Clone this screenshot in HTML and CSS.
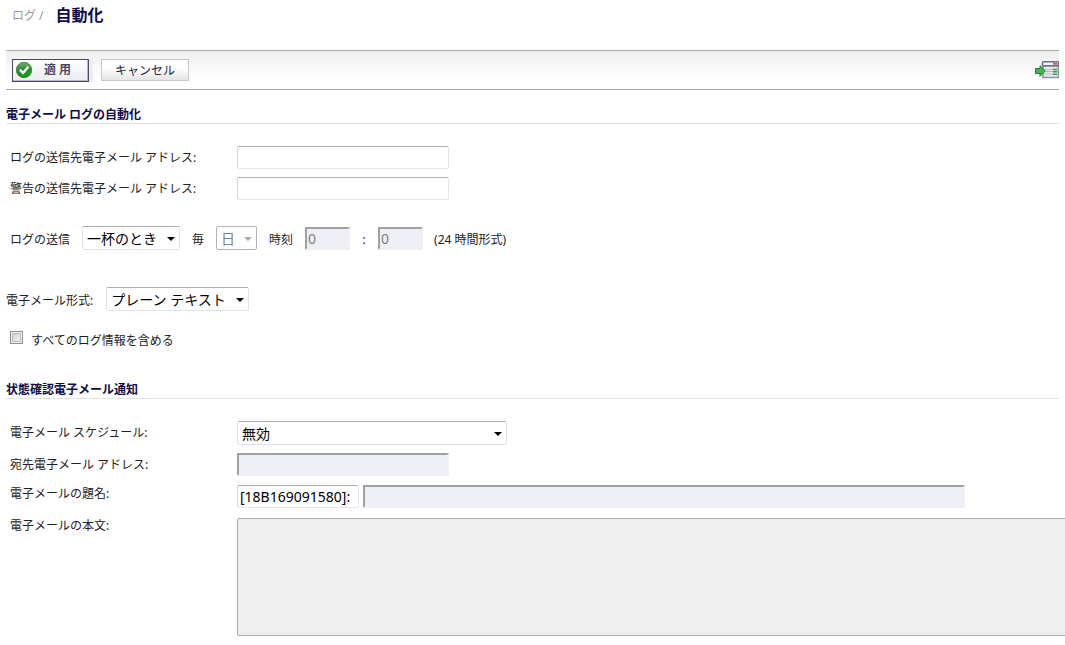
FILE: index.html
```html
<!DOCTYPE html>
<html lang="ja">
<head>
<meta charset="utf-8">
<title>ログ / 自動化</title>
<link rel="stylesheet" href="styles.css">
</head>
<body>
<header class="page-head">
  <span class="crumb">ログ /</span>
  <h1 class="title">自動化</h1>
</header>
<form class="page">
  <div class="toolbar">
    <button type="button" class="apply">
      <svg class="apply-icon" viewBox="0 0 17 17" aria-hidden="true">
        <defs>
          <linearGradient id="ball" x1="0" y1="0" x2="0" y2="1"><stop offset="0" stop-color="#6fb26f"/><stop offset=".5" stop-color="#2c8b2d"/><stop offset="1" stop-color="#0f9a14"/></linearGradient>
        </defs>
        <circle cx="8" cy="8" r="7.700" fill="url(#ball)" stroke="#2f7d32" stroke-width=".8"/>
        <path d="M3.800 7.600L7 11L12.300 4.800" fill="none" stroke="#fff" stroke-width="2.300"/>
      </svg>
      <span>適 用</span>
    </button>
    <button type="button" class="cancel">キャンセル</button>
    <button type="button" class="mode" aria-label="モード">
      <svg class="mode-icon" viewBox="0 0 24 18" aria-hidden="true">
        <path d="M7.500 5V1.500Q7.500 .8 8.500 .8H22.500Q23.300 .8 23.300 1.500V5Z" fill="#eef0f6" stroke="#6c6f86" stroke-width="1.500"/>
        <path d="M8 5V16.500H23.300V5Z" fill="#e6e8ee" stroke="#8f91a3" stroke-width="1.500"/>
        <path d="M7 4.800H24" stroke="#6c6f86" stroke-width="1.200"/>
        <path d="M18 2.800H22" stroke="#d0525c" stroke-width="1.800"/>
        <path d="M10 8.500H18M10 10.500H18M10 13H18" stroke="#b5b7c4"/>
        <path d="M18 8.500H22M18 10.800H22M18 13.200H22" stroke="#3f9b43" stroke-width="1.500"/>
        <path d="M.5 7.500H5V4.800L10.300 10L5 15.300V12.500H.5Z" fill="#45b54a" stroke="#20812a"/>
      </svg>
    </button>
  </div>

  <section class="section">
    <h2 class="heading">電子メール ログの自動化</h2>
    <div class="rows">
      <div class="row">
        <label class="label" for="log-to">ログの送信先電子メール アドレス:</label>
        <input class="box medium" id="log-to" type="text">
      </div>
      <div class="row">
        <label class="label" for="alert-to">警告の送信先電子メール アドレス:</label>
        <input class="box medium" id="alert-to" type="text">
      </div>
    </div>
    <div class="schedule">
      <label class="low" for="when">ログの送信</label>
      <span class="pick pick-when"><select id="when"><option>一杯のとき</option></select></span>
      <label class="low" for="every">毎</label>
      <span class="pick pick-day off"><select id="every" disabled><option>日</option></select></span>
      <label class="low at" for="hour">時刻</label>
      <input class="box off-box time" id="hour" type="text" value="0" disabled>
      <label class="low colon" for="minute">:</label>
      <input class="box off-box time" id="minute" type="text" value="0" disabled>
      <span class="low hint">(24 時間形式)</span>
    </div>
    <div class="format">
      <label class="low" for="format">電子メール形式:</label>
      <span class="pick pick-format"><select id="format"><option>プレーン テキスト</option></select></span>
    </div>
    <div class="include">
      <input class="check" id="all" type="checkbox">
      <label class="check-label" for="all">すべてのログ情報を含める</label>
    </div>
  </section>

  <section class="section section-health">
    <h2 class="heading">状態確認電子メール通知</h2>
    <div class="rows">
      <div class="row">
        <label class="label" for="plan">電子メール スケジュール:</label>
        <span class="pick pick-plan"><select id="plan"><option>無効</option></select></span>
      </div>
      <div class="row">
        <label class="label" for="to">宛先電子メール アドレス:</label>
        <input class="box off-box medium" id="to" type="text" disabled>
      </div>
      <div class="row top">
        <label class="label" for="subject">電子メールの題名:</label>
        <input class="box serial" type="text" value="[18B169091580]:" aria-label="題名の接頭辞" readonly>
        <input class="box off-box long" id="subject" type="text" disabled>
      </div>
      <div class="row top">
        <label class="label" for="body">電子メールの本文:</label>
        <textarea class="body-box" id="body" disabled></textarea>
      </div>
    </div>
  </section>
</form>
</body>
</html>
```

FILE: styles.css
```css
* { box-sizing: border-box; }
body {
  margin: 0;
  padding: 0 6px;
  background: #fff;
  color: #222;
  font: 12px/16px "Noto Sans", "Noto Sans CJK JP", sans-serif;
  overflow-x: hidden;
}
input, select, textarea, button {
  margin: 0;
  color: #000;
  font-family: inherit;
}
.page-head {
  display: flex;
  align-items: flex-start;
  gap: 12px;
  height: 32px;
  padding: 5px 0 0 6px;
}
.crumb { padding-top: 3px; color: #999; }
.title {
  margin: 0;
  color: #0c0c4a;
  font-size: 16px;
  line-height: 20px;
}
.toolbar {
  display: flex;
  align-items: center;
  height: 40px;
  margin-top: 18px;
  padding-left: 6px;
  border-top: 1px solid #aaa;
  border-bottom: 1px solid #aaa;
  background: linear-gradient(#efefef, #fff 80%);
}
.apply {
  display: flex;
  align-items: center;
  gap: 11px;
  width: 77px;
  height: 23px;
  padding: 0 0 0 3px;
  border: 1px solid #4b4866;
  box-shadow: inset -1px -1px #b9b8c6, 4px 0 #ededf3;
  background: linear-gradient(#fff, #ececf0);
  color: #4b4866;
  font-size: 12px;
  font-weight: bold;
  line-height: 16px;
}
.apply-icon { width: 17px; height: 17px; flex: none; }
.cancel {
  width: 88px;
  height: 22px;
  margin-left: 12px;
  padding: 0;
  border: 1px solid #c8c8c8;
  background: linear-gradient(#fff 40%, #e4e4e4);
  color: #222244;
  font-size: 12px;
}
.mode {
  display: flex;
  margin-left: auto;
  padding: 0;
  border: 0;
  background: none;
}
.mode-icon { width: 24px; height: 18px; }
.section { padding-top: 16px; }
.section-health { padding-top: 32px; }
.heading {
  margin: 0;
  border-bottom: 1px solid #e2e2e2;
  color: #0c0c4a;
  font-size: 12px;
  line-height: 17px;
}
.rows {
  display: flex;
  flex-direction: column;
  gap: 8px;
  padding: 22px 0 0 4px;
}
.row { display: flex; align-items: center; }
.row.top { align-items: flex-start; padding-top: 1px; }
.label { flex: none; width: 227px; }
.top .label { padding-top: 1px; }
.low { padding-top: 4px; }
.box {
  height: 23px;
  padding: 0 2px;
  border: 1px solid #e3e5ee;
  border-top-color: #abadb3;
  border-left-color: #d5d8e2;
  border-radius: 2px;
  background: #fff;
  font-size: 14px;
}
.off-box {
  border: 2px solid #eff0f2;
  border-top-color: #a0a0a0;
  border-left-color: #a0a0a0;
  border-radius: 0;
  padding: 0 1px;
  background: #eeeff4;
  color: #808080;
}
.medium { width: 212px; }
.serial { width: 122px; margin-right: 4px; }
.long { width: 602px; }
.time { width: 45px; }
.pick { position: relative; display: block; height: 24px; }
.pick select {
  display: block;
  width: 100%;
  height: 24px;
  padding: 0 4px;
  appearance: none;
  border: 1px solid #dfe2ea;
  border-top-color: #abadb3;
  border-radius: 2px;
  background: #fff;
  font-size: 14px;
  opacity: 1;
}
.pick::after {
  content: "";
  position: absolute;
  top: 11px;
  right: 5px;
  border: 4px solid transparent;
  border-top-color: #000;
  border-bottom: 0;
  pointer-events: none;
}
.off select { border-color: #b3b3b3; color: #808080; }
.off::after { border-top-color: #aaa; }
.pick-when { width: 98px; margin: 0 12px; }
.pick-day { width: 41px; margin: 0 12px; }
.pick-format { width: 143px; }
.pick-plan { width: 270px; }
.schedule {
  display: flex;
  align-items: center;
  margin-top: 26px;
  padding-left: 4px;
}
.at { margin-right: 12px; }
.colon { width: 28px; text-align: center; }
.hint { margin-left: 11px; }
.format {
  display: flex;
  align-items: center;
  gap: 13px;
  margin-top: 37px;
}
.include {
  display: flex;
  align-items: flex-start;
  gap: 8px;
  margin-top: 20px;
  padding-left: 4px;
}
.check {
  width: 13px;
  height: 13px;
  appearance: none;
  border: 1px solid #8e8f8f;
  box-shadow: inset 0 0 0 1px #f4f4f4, inset 0 0 0 2px #b8bcc2;
  background: linear-gradient(135deg, #cbcfd5, #f6f6f6);
}
.check-label { padding-top: 2px; }
.body-box {
  flex: none;
  width: 840px;
  height: 118px;
  margin-top: 1px;
  border: 1px solid #abadb3;
  border-radius: 2px;
  background: #efefef;
  font-size: 14px;
  resize: none;
}
```
